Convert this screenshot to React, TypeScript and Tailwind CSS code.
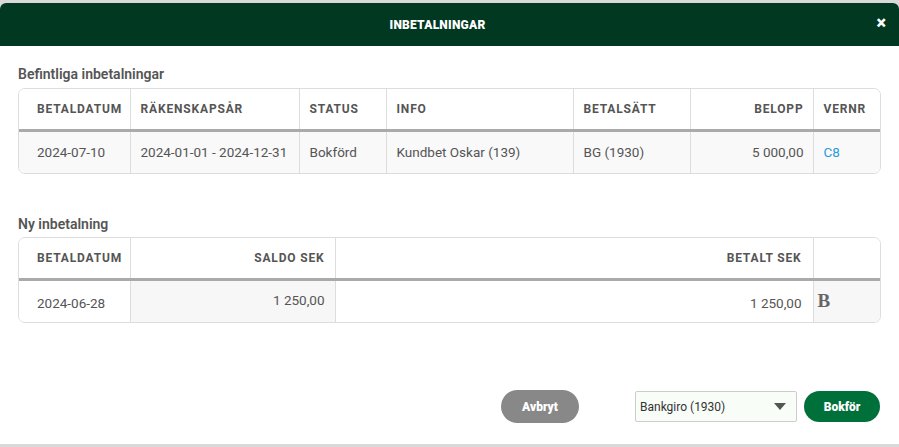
import React from "react";

const th = "h-[41px] text-[12px] font-bold uppercase tracking-[0.07em] text-[#555] px-[10px] border-l border-[#ddd] border-b-[3px] border-b-[#aaa] first:border-l-0 align-middle";
const td = "h-[43px] text-[13.5px] px-[10px] border-l border-[#ddd] first:border-l-0 align-middle whitespace-nowrap";

export default function App() {
  return (
    <div className="w-[899px] h-[447px] bg-[#d9d9d9] pt-[3px] overflow-hidden" style={{ fontFamily: "Roboto, 'Liberation Sans', sans-serif" }}>
      <div className="h-[441px] bg-white rounded-t-[6px] flex flex-col">
        <div className="h-[43px] bg-[#003822] rounded-t-[6px] flex items-center justify-center relative pr-[24px]">
          <span className="text-white text-[12px] font-black tracking-[0.02em]">INBETALNINGAR</span>
          <span className="absolute right-[13px] top-[11px] text-white text-[18px] font-black leading-none">×</span>
        </div>
        <div className="px-[18px] pt-[18px] flex flex-col">
          <div className="text-[14px] font-semibold text-[#555] leading-[20px]">Befintliga inbetalningar</div>
          <div className="mt-[4px] w-[863px] border border-[#ddd] rounded-[7px] overflow-hidden">
            <table className="w-full table-fixed border-collapse">
              <colgroup>
                <col className="w-[111px]" />
                <col className="w-[169px]" />
                <col className="w-[87px]" />
                <col className="w-[187px]" />
                <col className="w-[117px]" />
                <col className="w-[123px]" />
                <col />
              </colgroup>
              <thead>
                <tr className="bg-white">
                  <th className={th + " text-left pl-[18px]"}>Betaldatum</th>
                  <th className={th + " text-left"}>Räkenskapsår</th>
                  <th className={th + " text-left"}>Status</th>
                  <th className={th + " text-left"}>Info</th>
                  <th className={th + " text-left"}>Betalsätt</th>
                  <th className={th + " text-right pr-[9px]"}>Belopp</th>
                  <th className={th + " text-left"}>Vernr</th>
                </tr>
              </thead>
              <tbody>
                <tr className="bg-[#f9f9f9] text-[#555]">
                  <td className={td + " pl-[18px]"}>2024-07-10</td>
                  <td className={td}>2024-01-01 - 2024-12-31</td>
                  <td className={td}>Bokförd</td>
                  <td className={td}>Kundbet Oskar (139)</td>
                  <td className={td}>BG (1930)</td>
                  <td className={td + " text-right pr-[9px]"}>5 000,00</td>
                  <td className={td}><span className="text-[#2a9ad8]">C8</span></td>
                </tr>
              </tbody>
            </table>
          </div>

          <div className="mt-[40px] text-[14px] font-semibold text-[#555] leading-[20px]">Ny inbetalning</div>
          <div className="mt-[3px] w-[863px] border border-[#ddd] rounded-[7px] overflow-hidden">
            <table className="w-full table-fixed border-collapse">
              <colgroup>
                <col className="w-[111px]" />
                <col className="w-[205px]" />
                <col className="w-[478px]" />
                <col />
              </colgroup>
              <thead>
                <tr className="bg-white">
                  <th className={th + " text-left pl-[18px]"}>Betaldatum</th>
                  <th className={th + " text-right"}>Saldo SEK</th>
                  <th className={th + " text-right pr-[11px]"}>Betalt SEK</th>
                  <th className={th}></th>
                </tr>
              </thead>
              <tbody className="text-[#555]">
                <tr>
                  <td className={td + " pl-[18px] bg-white pt-[4px]"}>2024-06-28</td>
                  <td className={td + " text-right bg-[#f7f7f7] align-top pt-[9px]"}>1 250,00</td>
                  <td className={td + " text-right pr-[11px] bg-white pt-[4px]"}>1 250,00</td>
                  <td className={td + " bg-[#f7f7f7] pl-[4px]"}>
                    <span className="text-[19px] font-bold text-[#666]" style={{ fontFamily: "'Liberation Serif', serif" }}>B</span>
                  </td>
                </tr>
              </tbody>
            </table>
          </div>
        </div>
        <div className="flex-1" />
        <div className="flex items-center justify-end px-[19px] pb-[21px]">
          <button className="w-[78px] h-[33px] rounded-full bg-[#888] text-white text-[12px] font-black">Avbryt</button>
          <div className="ml-[56px] w-[162px] h-[31px] border border-[#ccc] rounded-[2px] bg-[#f8fdf8] flex items-center justify-between pl-[4px] pr-[10px]">
            <span className="text-[12px] text-[#333]">Bankgiro (1930)</span>
            <svg width="12" height="7" viewBox="0 0 12 7"><path d="M0 0 L12 0 L6 7 Z" fill="#555" /></svg>
          </div>
          <button className="ml-[7px] w-[76px] h-[31px] rounded-full bg-[#00703a] text-white text-[12px] font-black">Bokför</button>
        </div>
      </div>
    </div>
  );
}
